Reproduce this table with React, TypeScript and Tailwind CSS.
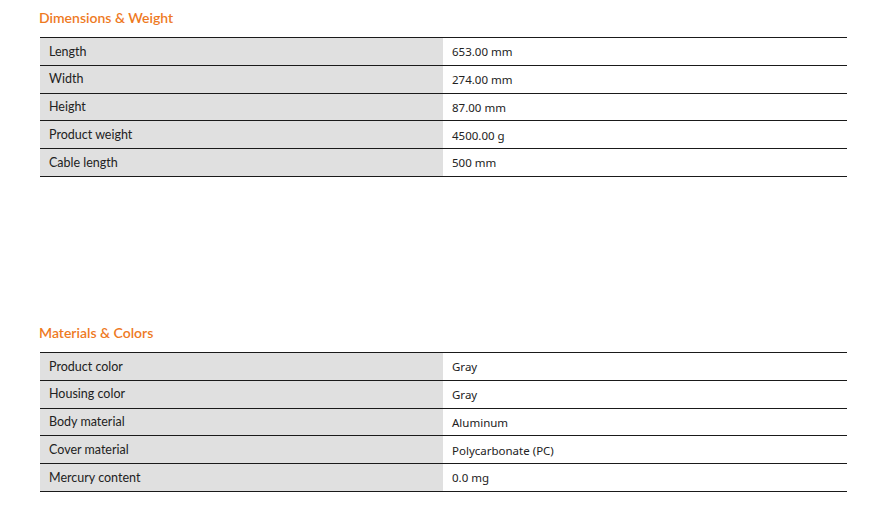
import React from 'react';

type Spec = { label: string; value: string };

const sections: { title: string; rows: Spec[] }[] = [
  {
    title: 'Dimensions & Weight',
    rows: [
      { label: 'Length', value: '653.00 mm' },
      { label: 'Width', value: '274.00 mm' },
      { label: 'Height', value: '87.00 mm' },
      { label: 'Product weight', value: '4500.00 g' },
      { label: 'Cable length', value: '500 mm' },
    ],
  },
  {
    title: 'Materials & Colors',
    rows: [
      { label: 'Product color', value: 'Gray' },
      { label: 'Housing color', value: 'Gray' },
      { label: 'Body material', value: 'Aluminum' },
      { label: 'Cover material', value: 'Polycarbonate (PC)' },
      { label: 'Mercury content', value: '0.0 mg' },
    ],
  },
];

const SpecSection: React.FC<{ title: string; rows: Spec[] }> = ({ title, rows }) => (
  <section className="h-[315px]">
    <h2 className="pl-[39px] pt-[8px] h-[37px] font-['Lato',sans-serif] font-semibold text-[14px] leading-[20px] text-[#ee7a1f]">{title}</h2>
    <div className="ml-[40px] w-[807px] border-t border-[#1a1a1a]">
      {rows.map((row) => (
        <div key={row.label} className="grid grid-cols-[403px_1fr] h-[27.8px] border-b border-[#1a1a1a]">
          <div className="bg-[#e0e0e0] pl-[9px] pt-[1px] flex items-center font-['Lato',sans-serif] text-[12.5px] text-[#222]">{row.label}</div>
          <div className="pl-[9px] pt-[1px] flex items-center text-[11.5px] text-[#222]">{row.value}</div>
        </div>
      ))}
    </div>
  </section>
);

export default function App() {
  return (
    <div className="w-[887px] h-[512px] bg-white font-['Noto_Sans','Open_Sans',sans-serif] overflow-hidden">
      {sections.map((s) => (
        <SpecSection key={s.title} title={s.title} rows={s.rows} />
      ))}
    </div>
  );
}
